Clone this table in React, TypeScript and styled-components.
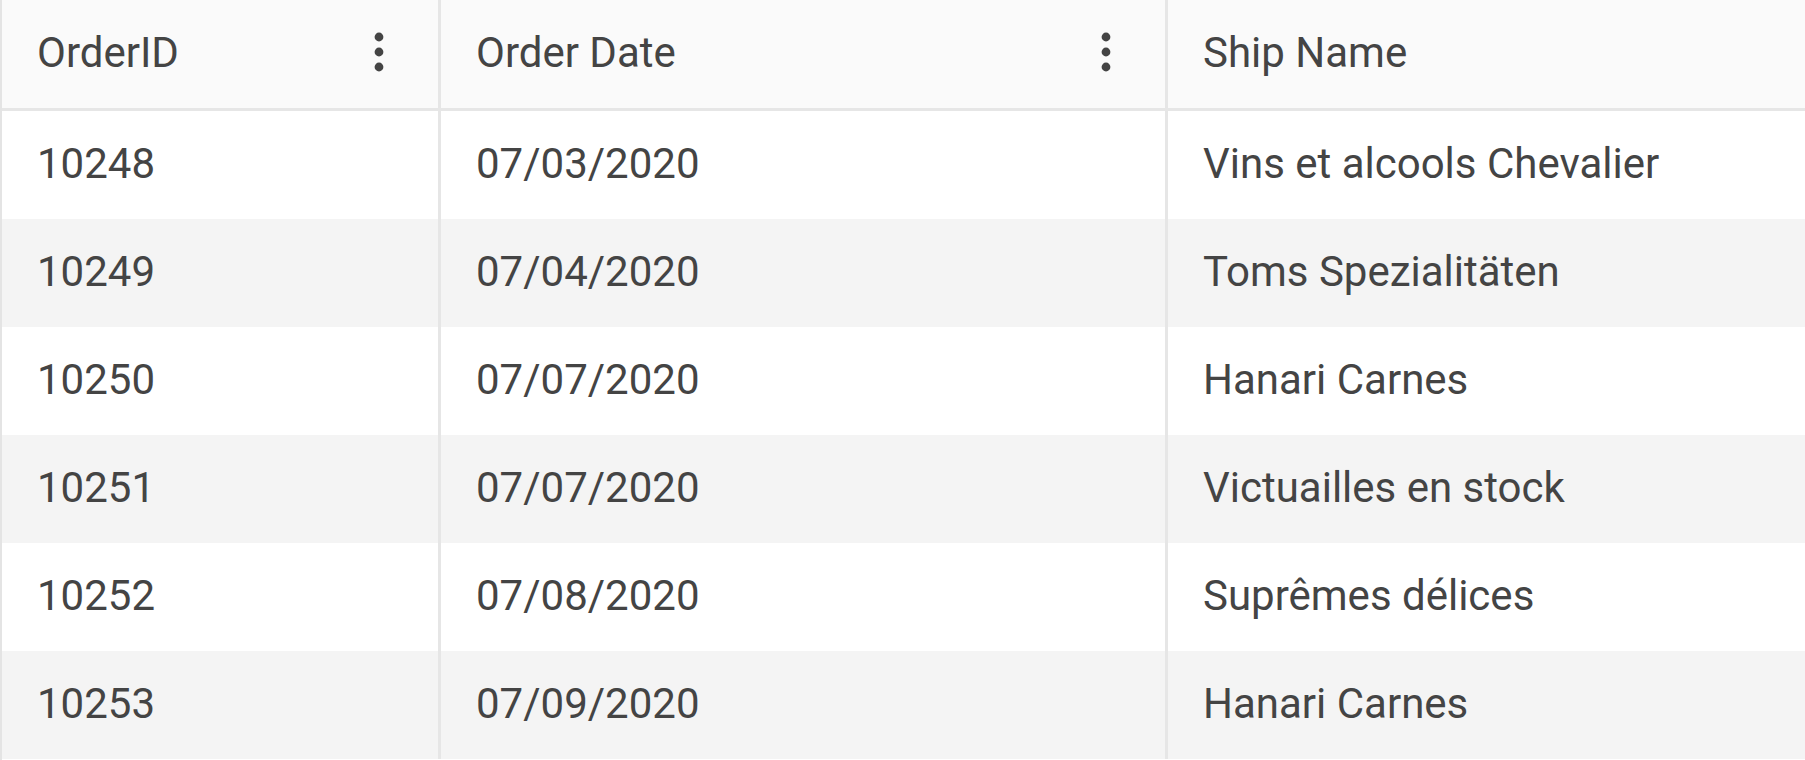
import styled, { createGlobalStyle } from "styled-components";

const GlobalStyle = createGlobalStyle`
  html, body {
    margin: 0;
    padding: 0;
    background: #ffffff;
    overflow: hidden;
  }
  body {
    font-family: Roboto, "Liberation Sans", sans-serif;
  }
`;

const Grid = styled.div`
  width: 1805px;
  height: 760px;
  overflow: hidden;
  border-left: 2px solid #e4e4e4;
  box-sizing: border-box;
  color: #444444;
  font-size: 42px;
`;

const HeaderRow = styled.div`
  display: grid;
  grid-template-columns: 439px 727px 1fr;
  height: 111px;
  background: #fafafa;
  border-bottom: 3px solid #e6e6e6;
  box-sizing: border-box;
`;

const Row = styled.div<{ $alt: boolean }>`
  display: grid;
  grid-template-columns: 439px 727px 1fr;
  height: 108px;
  background: ${(p) => (p.$alt ? "#f4f4f4" : "#ffffff")};
`;

const HeaderCell = styled.div<{ $last?: boolean }>`
  display: flex;
  align-items: center;
  justify-content: space-between;
  padding: 0 54px 4px 35px;
  border-right: ${(p) => (p.$last ? "none" : "3px solid #e6e6e6")};
  white-space: nowrap;
`;

const Cell = styled.div<{ $last?: boolean }>`
  display: flex;
  align-items: center;
  padding: 0 35px 4px;
  border-right: ${(p) => (p.$last ? "none" : "3px solid #e6e6e6")};
  white-space: nowrap;
`;

const MenuIcon = styled.svg`
  width: 10px;
  height: 40px;
  flex-shrink: 0;
`;

function Kebab() {
  return (
    <MenuIcon viewBox="0 0 10 40">
      <circle cx="5" cy="5" r="4.4" fill="#444444" />
      <circle cx="5" cy="20" r="4.4" fill="#444444" />
      <circle cx="5" cy="35" r="4.4" fill="#444444" />
    </MenuIcon>
  );
}

const orders = [
  { id: 10248, date: "07/03/2020", ship: "Vins et alcools Chevalier" },
  { id: 10249, date: "07/04/2020", ship: "Toms Spezialitäten" },
  { id: 10250, date: "07/07/2020", ship: "Hanari Carnes" },
  { id: 10251, date: "07/07/2020", ship: "Victuailles en stock" },
  { id: 10252, date: "07/08/2020", ship: "Suprêmes délices" },
  { id: 10253, date: "07/09/2020", ship: "Hanari Carnes" },
];

export default function App() {
  return (
    <>
      <GlobalStyle />
      <Grid>
        <HeaderRow>
          <HeaderCell>
            <span>OrderID</span>
            <Kebab />
          </HeaderCell>
          <HeaderCell>
            <span>Order Date</span>
            <Kebab />
          </HeaderCell>
          <HeaderCell $last>
            <span>Ship Name</span>
          </HeaderCell>
        </HeaderRow>
        {orders.map((o, i) => (
          <Row key={o.id} $alt={i % 2 === 1}>
            <Cell>{o.id}</Cell>
            <Cell>{o.date}</Cell>
            <Cell $last>{o.ship}</Cell>
          </Row>
        ))}
      </Grid>
    </>
  );
}
